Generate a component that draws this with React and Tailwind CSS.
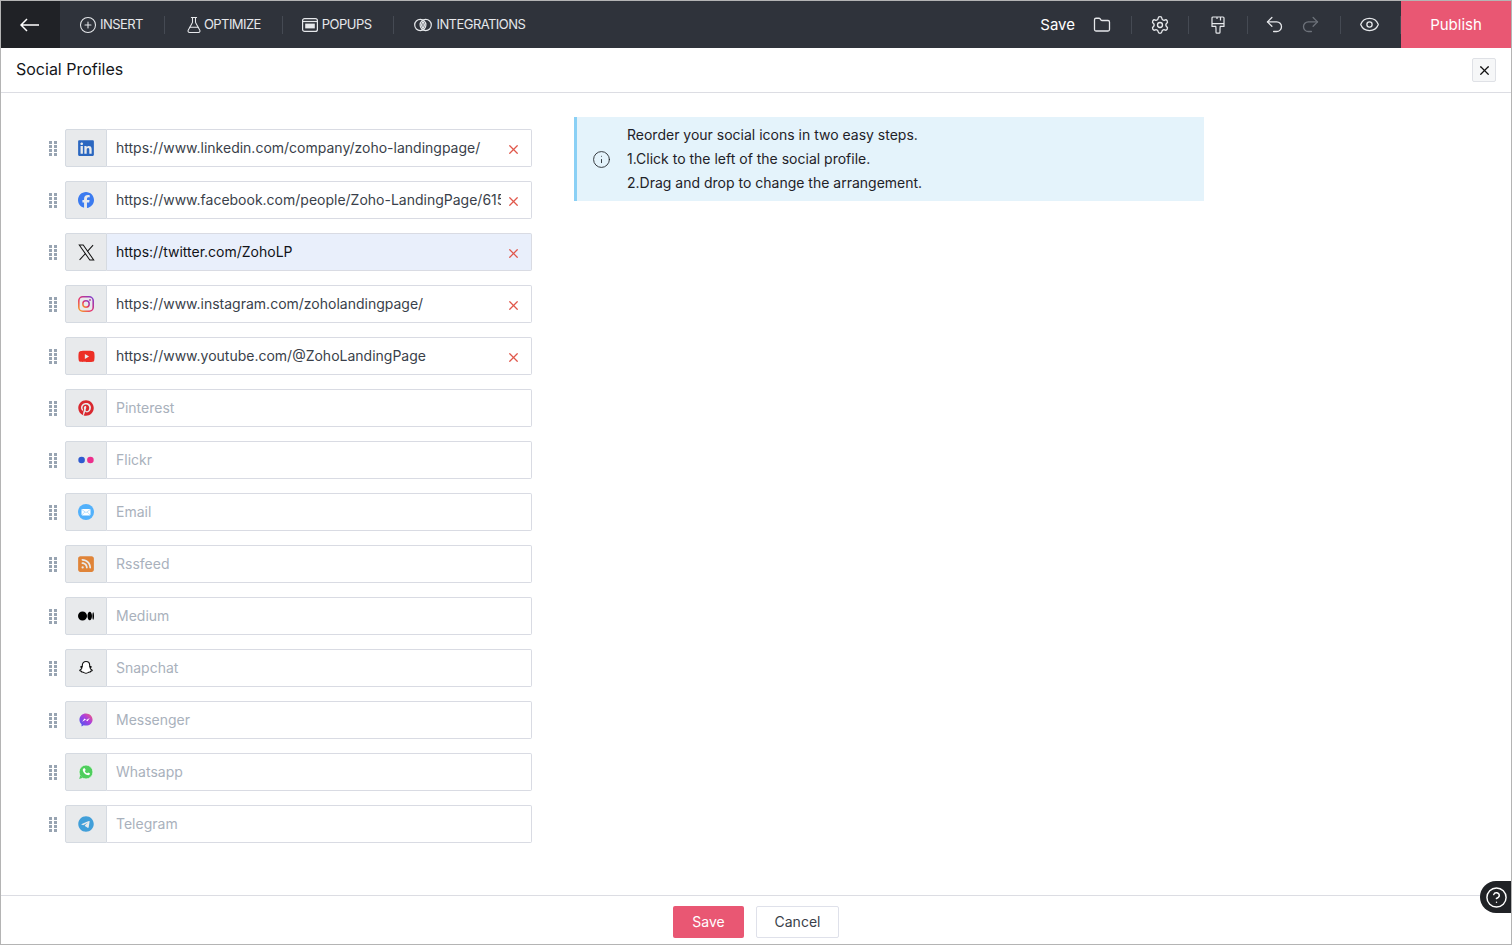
import React from "react";
import { CirclePlus, FlaskConical, Folder, Settings, Undo2, Redo2, Eye, X, Info, CircleHelp } from "lucide-react";
import { FaFacebook, FaPinterest, FaTelegram, FaLinkedin, FaYoutube, FaSquareRss, FaMedium } from "react-icons/fa6";

const Dots = () => (
  <svg width="8" height="15" viewBox="0 0 8 15" className="shrink-0" fill="#98a4b2">
    {[0, 4, 8, 12].map((y) => (
      <g key={y}>
        <rect x="0" y={y} width="3" height="3" />
        <rect x="5" y={y} width="3" height="3" />
      </g>
    ))}
  </svg>
);

const Back = () => (
  <svg width="19" height="14" viewBox="0 0 19 14" fill="none" stroke="#fff" strokeWidth="1.5">
    <path d="M1 7h18M7 1 1 7l6 6" />
  </svg>
);

const XLogo = () => (
  <svg width="17" height="17" viewBox="0 0 16 16" fill="none" stroke="#111" strokeWidth="0.95">
    <path d="M1.2 1h3.7l9.9 14h-3.7z" />
    <path d="M14.2 1 8.9 6.9M7 9 1.5 15" />
  </svg>
);

const Insta = () => (
  <svg width="16" height="16" viewBox="0 0 16 16" fill="none">
    <defs>
      <linearGradient id="ig" x1="0" y1="1" x2="1" y2="0">
        <stop offset="0" stopColor="#f9a825" />
        <stop offset="0.45" stopColor="#e6336f" />
        <stop offset="1" stopColor="#7b3fd3" />
      </linearGradient>
    </defs>
    <rect x="0.8" y="0.8" width="14.4" height="14.4" rx="4" stroke="url(#ig)" strokeWidth="1.6" />
    <circle cx="8" cy="8" r="3.2" stroke="url(#ig)" strokeWidth="1.5" />
    <circle cx="12" cy="4" r="0.9" fill="#b5369f" />
  </svg>
);

const Flickr = () => (
  <svg width="16" height="16" viewBox="0 0 16 16">
    <circle cx="3.6" cy="8" r="3.3" fill="#2f5bd0" />
    <circle cx="12.4" cy="8" r="3.3" fill="#ec2f8c" />
  </svg>
);

const Mail = () => (
  <svg width="16" height="16" viewBox="0 0 16 16">
    <circle cx="8" cy="8" r="8" fill="#52b1fb" />
    <rect x="3.5" y="5" width="9" height="6.4" rx="0.8" fill="#fff" />
    <path d="M3.8 5.5 8 8.6l4.2-3.1M3.8 11l3-3M12.2 11l-3-3" stroke="#9dd2fb" strokeWidth="0.7" fill="none" />
  </svg>
);

const Snap = () => (
  <svg width="16" height="16" viewBox="0 0 16 16" fill="#fff" stroke="#111" strokeWidth="1.1" strokeLinejoin="round">
    <path d="M8 1.5c2.3 0 3.7 1.7 3.7 3.9v1.3l1.2-.2c.5.3.2.8-.9 1.2.2 1.2 1.2 2.2 2.3 2.6-.2.6-1 .7-1.7.9l-.3.8c-1-.1-1.7 0-2.4.6-.6.4-1.2.7-1.9.7s-1.3-.3-1.9-.7c-.7-.6-1.4-.7-2.4-.6l-.3-.8c-.7-.2-1.5-.3-1.7-.9 1.1-.4 2.1-1.4 2.3-2.6-1.1-.4-1.4-.9-.9-1.2l1.2.2V5.4c0-2.2 1.4-3.9 3.7-3.9z" />
  </svg>
);

const Messenger = () => (
  <svg width="14" height="14" viewBox="0 0 16 16">
    <defs>
      <linearGradient id="ms" x1="0" y1="1" x2="1" y2="0">
        <stop offset="0" stopColor="#3d5bf0" />
        <stop offset="0.55" stopColor="#a83fe0" />
        <stop offset="1" stopColor="#fb5c74" />
      </linearGradient>
    </defs>
    <path d="M8 .5C3.8.5.5 3.6.5 7.6c0 2.1.9 3.9 2.4 5.2v2.7l2.5-1.4c.8.2 1.7.3 2.6.3 4.2 0 7.5-3 7.5-6.8S12.2.5 8 .5z" fill="url(#ms)" />
    <path d="m3.6 9.9 2.6-3.6 2.2 1.7 3.9-2.2-2.6 3.6-2.2-1.7z" fill="#fff" />
  </svg>
);

const Whats = () => (
  <svg width="16" height="16" viewBox="0 0 16 16">
    <circle cx="8" cy="8" r="6.9" fill="#4fce5d" stroke="#fff" strokeWidth="0.6" />
    <path d="M1.2 15l1.1-3.8 2.6 2.6z" fill="#4fce5d" />
    <path d="M5.8 4.2c-.9.5-1.2 1.5-.9 2.5.6 2.1 2.3 3.8 4.4 4.4 1 .3 2 0 2.5-.9l.1-.9-1.8-.9-.9.9c-1.1-.4-2-1.3-2.4-2.4l.9-.9-.9-1.8z" fill="#fff" />
  </svg>
);

const Popups = () => (
  <svg width="16" height="14" viewBox="0 0 16 14" fill="none" stroke="#e6e8eb" strokeWidth="1.2">
    <rect x="0.6" y="0.6" width="14.8" height="12.8" rx="2" />
    <path d="M.6 3.5h14.8" />
    <rect x="3.2" y="5.6" width="9.6" height="4.8" fill="#e6e8eb" stroke="none" />
  </svg>
);

const Integrations = () => (
  <svg width="18" height="14" viewBox="0 0 18 14" fill="none" stroke="#e6e8eb" strokeWidth="1.2">
    <circle cx="6.3" cy="7" r="5.6" />
    <circle cx="11.7" cy="7" r="5.6" />
    <path d="M9 3.6c-1.6 2-1.6 4.8 0 6.8 1.6-2 1.6-4.8 0-6.8z" />
    <path d="M7.4 7h3.2M8 5h2M8 9h2" strokeWidth="0.8" />
  </svg>
);

const Brush = () => (
  <svg width="14" height="18" viewBox="0 0 14 18" fill="none" stroke="#e6e8eb" strokeWidth="1.2" strokeLinejoin="round">
    <path d="M2 1h10a1 1 0 0 1 1 1v8.4H9.2L9 13v3.2a1 1 0 0 1-1 1H6a1 1 0 0 1-1-1V13l-.2-2.6H1V2a1 1 0 0 1 1-1z" />
    <path d="M1 7.6h12M9.5 1v3.6M6 1v2" />
  </svg>
);

const rows = [
  { icon: <FaLinkedin size={18} color="#2b67c0" />, value: "https://www.linkedin.com/company/zoho-landingpage/" },
  { icon: <FaFacebook size={16} color="#3b7bf0" />, value: "https://www.facebook.com/people/Zoho-LandingPage/61556787240929/" },
  { icon: <XLogo />, value: "https://twitter.com/ZohoLP", active: true },
  { icon: <Insta />, value: "https://www.instagram.com/zoholandingpage/" },
  { icon: <FaYoutube size={17} color="#ed2f26" />, value: "https://www.youtube.com/@ZohoLandingPage" },
  { icon: <FaPinterest size={16} color="#d9282f" />, placeholder: "Pinterest" },
  { icon: <Flickr />, placeholder: "Flickr" },
  { icon: <Mail />, placeholder: "Email" },
  { icon: <FaSquareRss size={18} color="#e08438" />, placeholder: "Rssfeed" },
  { icon: <FaMedium size={16} color="#000" />, placeholder: "Medium" },
  { icon: <Snap />, placeholder: "Snapchat" },
  { icon: <Messenger />, placeholder: "Messenger" },
  { icon: <Whats />, placeholder: "Whatsapp" },
  { icon: <FaTelegram size={16} color="#419fd9" />, placeholder: "Telegram" },
];

const Row = ({ icon, value, placeholder, active }) => (
  <div className="flex items-center h-[38px]">
    <div className="w-[16px] flex justify-start"><Dots /></div>
    <div className="w-[42px] h-full flex items-center justify-center bg-[#e8eaec] border border-[#d5dae1] rounded-l-[2px]">{icon}</div>
    <div className={`w-[425px] h-full flex items-center border border-l-0 border-[#d9dbe3] rounded-r-[2px] pl-[9px] ${active ? "bg-[#e9effb]" : "bg-white"}`}>
      {value ? (
        <span className={`w-[385px] pb-[2px] overflow-hidden whitespace-nowrap text-[14px] ${active ? "text-[#111318]" : "text-[#3a3f4a]"}`}>{value}</span>
      ) : (
        <span className="pb-[2px] text-[14px] text-[#a9b1bc]">{placeholder}</span>
      )}
      {value && (
        <span className="ml-[5px] mt-[2px] flex items-center text-[#e0574b]"><X size={15} strokeWidth={2} /></span>
      )}
    </div>
  </div>
);

const Sep = ({ className = "" }) => <span className={`w-px h-[18px] bg-[#454a53] ${className}`} />;

export default function App() {
  return (
    <div className="relative w-[1512px] h-[945px] overflow-hidden flex flex-col bg-white border border-[#b4b4b4] text-[#111318] font-['Inter','Liberation_Sans',sans-serif]">
      <header className="h-[47px] shrink-0 flex items-center bg-[#2f333b] text-[#e6e8eb]">
        <div className="w-[59px] h-full flex items-center justify-center bg-[#202226] pr-[2px]">
          <Back />
        </div>
        <nav className="flex items-center text-[13px] tracking-[-0.55px]">
          <span className="ml-[19px] flex items-center gap-[3px]"><CirclePlus size={18} strokeWidth={1.4} />INSERT</span>
          <Sep className="ml-[21px]" />
          <span className="ml-[20px] flex items-center gap-[1px]"><FlaskConical size={18} strokeWidth={1.4} />OPTIMIZE</span>
          <Sep className="ml-[21px]" />
          <span className="ml-[19px] flex items-center gap-[4px]"><Popups />POPUPS</span>
          <Sep className="ml-[22px]" />
          <span className="ml-[20px] flex items-center gap-[4px]"><Integrations />INTEGRATIONS</span>
        </nav>
        <div className="ml-auto flex items-center h-full">
          <span className="pt-[2px] text-[15px] text-white">Save</span>
          <Folder size={18} strokeWidth={1.7} className="ml-[18px]" />
          <Sep className="ml-[20px]" />
          <Settings size={20} strokeWidth={1.6} className="ml-[18px]" />
          <Sep className="ml-[18px]" />
          <span className="ml-[22px] flex"><Brush /></span>
          <Sep className="ml-[22px]" />
          <Undo2 size={21} strokeWidth={1.5} className="ml-[16px]" />
          <Redo2 size={21} strokeWidth={1.5} className="ml-[15px] text-[#6d727a]" />
          <Sep className="ml-[19px]" />
          <Eye size={21} strokeWidth={1.5} className="ml-[18px]" />
          <Sep className="ml-[20px] w-[3px]" />
          <div className="w-[110px] h-full flex items-center justify-center pt-[2px] bg-[#e95773] text-white text-[15px]">Publish</div>
        </div>
      </header>

      <div className="h-[45px] shrink-0 flex items-center justify-between border-b border-[#dcdde3] pl-[15px] pr-[15px]">
        <h1 className="pb-[2px] text-[16px] font-normal text-[#14161a]">Social Profiles</h1>
        <button className="w-[24px] h-[24px] flex items-center justify-center bg-[#f6f7f8] border border-[#dfe1e6] rounded-[2px] text-[#111]"><X size={15} strokeWidth={2} /></button>
      </div>

      <main className="flex-1 flex items-start pl-[48px]">
        <div className="flex flex-col gap-[14px] pt-[36px] w-[484px]">
          {rows.map((r, i) => <Row key={i} {...r} />)}
        </div>
        <div className="ml-[41px] mt-[24px] w-[630px] h-[84px] flex items-center bg-[#e4f3fb] border-l-[3px] border-[#8ad0f5]">
          <Info size={19} strokeWidth={1.1} className="ml-[15px] text-[#1d2025]" />
          <div className="ml-[16px] pb-[1px] text-[14px] leading-[24px] text-[#1f2228]">
            <p>Reorder your social icons in two easy steps.</p>
            <p>1.Click to the left of the social profile.</p>
            <p>2.Drag and drop to change the arrangement.</p>
          </div>
        </div>
      </main>

      <footer className="h-[49px] shrink-0 flex items-start justify-center gap-[12px] border-t border-[#dcdde3] pt-[10px]">
        <button className="w-[71px] h-[32px] pb-[2px] bg-[#e95773] text-white text-[14px] rounded-[2px]">Save</button>
        <button className="w-[83px] h-[32px] pb-[2px] bg-white border border-[#dfe1ea] text-[#3a3f4a] text-[14px] rounded-[2px]">Cancel</button>
      </footer>

      <div className="absolute right-[-1px] top-[880px] w-[32px] h-[32px] flex items-center justify-center bg-[#202226] rounded-l-[16px] text-white">
        <CircleHelp size={23} strokeWidth={1.5} />
      </div>
    </div>
  );
}
